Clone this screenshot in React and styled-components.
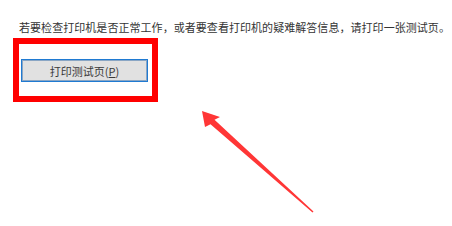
import React from "react";
import styled, { createGlobalStyle } from "styled-components";

const GlobalStyle = createGlobalStyle`
  html, body {
    margin: 0;
    padding: 0;
    background: #ffffff;
  }
  body {
    font-family: "Noto Sans CJK SC", "Noto Sans", sans-serif;
  }
`;

const Page = styled.div`
  position: relative;
  width: 452px;
  height: 226px;
  box-sizing: border-box;
  padding: 20px 0 0 13px;
  overflow: hidden;
  background: #ffffff;
`;

const Instruction = styled.p`
  margin: 0 0 4px 6px;
  font-size: 11px;
  line-height: 14px;
  letter-spacing: 0.05px;
  color: #333333;
  white-space: nowrap;
`;

const Highlight = styled.div`
  width: 145px;
  height: 64px;
  box-sizing: border-box;
  border: 6px solid #ff0000;
  padding: 15px 0 0 2px;
`;

const TestButton = styled.button`
  display: flex;
  align-items: center;
  justify-content: center;
  width: 127px;
  height: 23px;
  box-sizing: border-box;
  border: 1px solid #1f7ad2;
  box-shadow: inset 0 0 0 1px #8aa6c4;
  background: #e1e1e1;
  font-family: "Noto Sans CJK SC", "Noto Sans", sans-serif;
  font-size: 11px;
  color: #3a3a3a;
  padding: 0;
  outline: none;

  u {
    text-decoration: underline;
  }
`;

const Arrow = styled.svg`
  position: absolute;
  left: 0;
  top: 0;
  pointer-events: none;
`;

export default function App() {
  return (
    <>
      <GlobalStyle />
      <Page>
        <Instruction>
          若要检查打印机是否正常工作，或者要查看打印机的疑难解答信息，请打印一张测试页。
        </Instruction>
        <Highlight>
          <TestButton>
            打印测试页(<u>P</u>)
          </TestButton>
        </Highlight>
        <Arrow width="452" height="226" viewBox="0 0 452 226">
          <polygon
            points="202,111 220,117 214.5,119.8 313.5,211.5 312.5,212.5 210.5,124.2 205,127"
            fill="#ff3636"
          />
        </Arrow>
      </Page>
    </>
  );
}
